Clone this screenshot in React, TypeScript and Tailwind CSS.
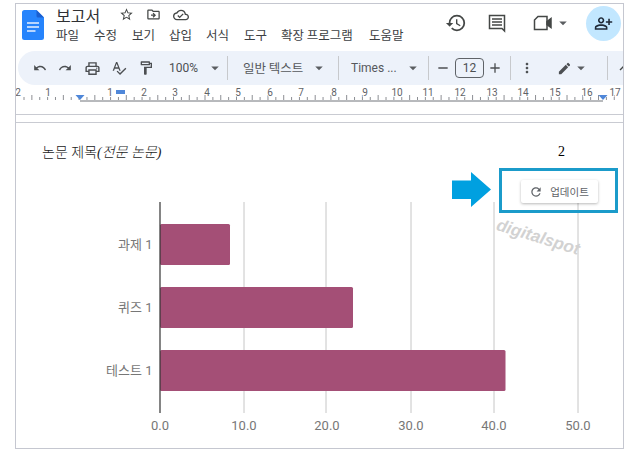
import React from "react";
import {
  MdUndo, MdRedo, MdOutlinePrint, MdOutlineSpellcheck, MdOutlineFormatPaint, MdMoreVert, MdEdit, MdRefresh,
  MdOutlinePersonAddAlt, MdHistory, MdStarBorder, MdOutlineDriveFileMove, MdOutlineCloudDone, MdArrowDropDown, MdAdd, MdRemove,
} from "react-icons/md";

const KR = "font-['Noto_Sans_CJK_KR','Noto_Sans',sans-serif]";

function Caret({ className = "" }: { className?: string }) {
  return <MdArrowDropDown size={18} className={`text-[#5a5d60] shrink-0 ${className}`} />;
}
function Sep({ className = "" }: { className?: string }) {
  return <div className={`w-px h-[24px] bg-[#c7c9cc] shrink-0 ${className}`} />;
}
function Slot({ w, children }: { w: string; children: React.ReactNode }) {
  return <div className={`${w} shrink-0 flex items-center justify-center text-[#4c4f52]`}>{children}</div>;
}

function DocsLogo() {
  return (
    <svg width="22" height="30" viewBox="0 0 22 30" className="shrink-0">
      <path d="M2.5 0H14.5L22 7.5V27.5a2.5 2.5 0 0 1-2.5 2.5H2.5A2.5 2.5 0 0 1 0 27.5V2.5A2.5 2.5 0 0 1 2.5 0z" fill="#2684fc" />
      <path d="M14.5 0L22 7.5H16a1.5 1.5 0 0 1-1.5-1.5z" fill="#1a5fd0" />
      <path d="M5 13h12M5 17h12M5 21h8.5" stroke="#e8f0fe" strokeWidth="1.7" />
    </svg>
  );
}

function Ruler() {
  const labels: [string, number][] = [["2", 18], ["1", 48], ["1", 110], ["2", 144], ["3", 175], ["4", 207], ["5", 238], ["6", 270], ["7", 301], ["8", 334], ["9", 365], ["10", 397], ["11", 428], ["12", 460], ["13", 492], ["14", 523], ["15", 555], ["16", 587], ["17", 615]];
  const ticks: number[] = [];
  for (let i = 0; i < 76; i++) ticks.push(24 + i * 7.87);
  return (
    <svg width="607" height="17" viewBox="16 85 607 17" className="block shrink-0">
      {ticks.map((x, i) => (
        <line key={i} x1={x} x2={x} y1={i % 2 ? 95 : 97} y2="100" stroke="#8d8f94" strokeWidth="1" />
      ))}
      {labels.map(([t, x], i) => (
        <text key={i} x={x} y="96" textAnchor="middle" fontSize="10" fill="#5f6368" fontFamily="Roboto, sans-serif" stroke="#fff" strokeWidth="2" paintOrder="stroke">{t}</text>
      ))}
      <line x1="80" x2="603" y1="101" y2="101" stroke="#70757a" strokeWidth="1" />
      <path d="M75.5 95h9l-4.5 5z" fill="#4f87d9" />
      <path d="M598.5 95h9l-4.5 5z" fill="#4f87d9" />
      <rect x="116" y="90" width="9" height="4" fill="#4f87d9" />
    </svg>
  );
}

function Chart() {
  const f = "Roboto, 'Noto Sans CJK KR', sans-serif";
  const grid = [244, 326, 411, 494, 578];
  const xl: [string, number][] = [["0.0", 160], ["10.0", 244], ["20.0", 327], ["30.0", 411], ["40.0", 494], ["50.0", 578]];
  const bars: [string, number, number][] = [["과제 1", 224, 230], ["퀴즈 1", 287, 353], ["테스트 1", 350, 505.5]];
  return (
    <svg width="607" height="283" viewBox="16 165 607 283" className="block">
      {grid.map((x) => (
        <line key={x} x1={x} x2={x} y1="202" y2="413" stroke="#c6c6c6" strokeWidth="1" />
      ))}
      {bars.map(([t, y, r]) => (
        <g key={t}>
          <rect x="160" y={y} width={r - 160} height="41" rx="1.5" fill="#a44f76" />
          <text x="152.5" y={y + 25} textAnchor="end" fontSize="13" fill="#777" fontFamily={f}>{t}</text>
        </g>
      ))}
      <line x1="160" x2="160" y1="202" y2="413" stroke="#333" strokeWidth="1.2" />
      {xl.map(([t, x]) => (
        <text key={t} x={x} y="430" textAnchor="middle" fontSize="13" fill="#777" fontFamily={f}>{t}</text>
      ))}
    </svg>
  );
}

export default function App() {
  return (
    <div className={`w-[640px] h-[450px] bg-white pt-[3px] pl-[15px] overflow-hidden ${KR}`}>
      <div className="w-[609px] h-[446px] border border-[#c5c7d0] flex flex-col overflow-hidden">
        {/* title bar */}
        <div className="h-[47px] shrink-0 flex items-start pl-[6px] bg-white">
          <div className="mt-[6px]"><DocsLogo /></div>
          <div className="ml-[12px] flex flex-col">
            <div className="flex items-center h-[21px]">
              <span className="text-[16px] leading-none text-[#303134] w-[63px]">보고서</span>
              <MdStarBorder size={15} className="text-[#444746]" />
              <MdOutlineDriveFileMove size={15} className="text-[#444746] ml-[12px]" />
              <MdOutlineCloudDone size={16} className="text-[#444746] ml-[12px]" />
            </div>
            <div className="flex items-center h-[21px] text-[12.5px] text-[#3c4043] leading-none">
              <span className="w-[38px]">파일</span>
              <span className="w-[38px]">수정</span>
              <span className="w-[37px]">보기</span>
              <span className="w-[37px]">삽입</span>
              <span className="w-[38px]">서식</span>
              <span className="w-[37px]">도구</span>
              <span className="w-[88px] whitespace-nowrap">확장 프로그램</span>
              <span>도움말</span>
            </div>
          </div>
          <div className="ml-auto flex items-center h-[38px] pr-[2px]">
            <MdHistory size={22} className="text-[#444746]" />
            <svg width="20" height="20" viewBox="0 0 20 20" className="ml-[20px]" fill="none" stroke="#444746">
              <path d="M2.5 2.5h15v15.5l-2.5-2.5H2.5z" strokeWidth="1.5" />
              <path d="M5 6h10M5 9h10M5 12h10" strokeWidth="1.4" />
            </svg>
            <svg width="20" height="16" viewBox="0 0 20 16" className="ml-[26px]" fill="none" stroke="#444746" strokeWidth="1.5">
              <path d="M5 1.5h9v13H1.5V5z" />
              <path d="M14 6.5l4-3v9l-4-3z" fill="#444746" />
            </svg>
            <Caret className="ml-[1px]" />
            <div className="ml-[14px] w-[35px] h-[35px] rounded-full bg-[#c2e7ff] flex items-center justify-center">
              <MdOutlinePersonAddAlt size={19} className="text-[#1f2937]" />
            </div>
          </div>
        </div>

        {/* toolbar */}
        <div className="ml-[2px] h-[34px] shrink-0 bg-[#edf2fa] rounded-l-[17px] flex items-center pl-[11px] text-[#4c4f52] overflow-hidden">
          <Slot w="w-[22px]"><MdUndo size={14} /></Slot>
          <Slot w="w-[28px]"><MdRedo size={14} /></Slot>
          <Slot w="w-[26px]"><MdOutlinePrint size={17} /></Slot>
          <Slot w="w-[28px]"><MdOutlineSpellcheck size={16} /></Slot>
          <Slot w="w-[26px]"><MdOutlineFormatPaint size={16} /></Slot>
          <span className="ml-[10px] w-[37px] shrink-0 text-[12px] font-['Roboto',sans-serif]">100%</span>
          <Caret />
          <Sep className="ml-[3px]" />
          <span className="ml-[15px] w-[67px] shrink-0 text-[12.5px] text-[#55585c] whitespace-nowrap">일반 텍스트</span>
          <Caret />
          <Sep className="ml-[10px]" />
          <span className="ml-[12px] w-[53px] shrink-0 text-[12px] text-[#55585c] whitespace-nowrap font-['Roboto',sans-serif]">Times ...</span>
          <Caret />
          <Sep className="ml-[6px]" />
          <MdRemove size={16} className="ml-[6px] shrink-0" />
          <div className="ml-[4px] w-[29px] h-[20px] border border-[#5f6368] rounded-[4px] flex items-center justify-center text-[12px] font-['Roboto',sans-serif] shrink-0">12</div>
          <MdAdd size={16} className="ml-[3px] shrink-0" />
          <Sep className="ml-[7px]" />
          <MdMoreVert size={16} className="ml-[8px] shrink-0" />
          <MdEdit size={15} className="ml-[22px] shrink-0" />
          <Caret />
          <Sep className="ml-[17px]" />
          <svg width="10" height="10" viewBox="0 0 10 10" className="ml-[11px] shrink-0" fill="none" stroke="#444746" strokeWidth="1.4">
            <path d="M1 7l4-4 4 4" />
          </svg>
        </div>

        <Ruler />

        {/* page */}
        <div className="h-[12px] shrink-0 bg-white" />
        <div className="h-[9px] shrink-0 border-y border-[#c9cbd2] bg-white" />

        <div className="relative flex-1 bg-white">
          <div className="h-[42px] flex items-start pt-[23px] pl-[26px] leading-none">
            <span className="w-[516px] text-[14px] font-light text-[#222] font-['Liberation_Serif','Noto_Sans_CJK_KR',serif] whitespace-nowrap">
              논문 제목<i>(전문 논문)</i>
            </span>
            <span className="-mt-px text-[14px] text-black font-['Liberation_Serif',serif]">2</span>
          </div>
          <Chart />

          {/* highlight overlays */}
          <div className="absolute left-[483px] top-[45px] w-[119px] h-[45px] border-[3px] border-[#1b9bca] flex items-start justify-center pt-[9px] pl-[1px]">
            <div className="w-[77px] h-[23px] bg-white rounded-[2px] shadow-[0_1px_3px_rgba(0,0,0,0.28)] flex items-center justify-center gap-[7px] text-[10.5px] text-[#5f6368]">
              <MdRefresh size={14} />
              <span>업데이트</span>
            </div>
          </div>
          <svg width="39" height="35" viewBox="0 0 39 35" className="absolute left-[436px] top-[49px]">
            <path d="M0 8.5h19V0l20 17.5L19 35v-8H0z" fill="#00a0e0" />
          </svg>
          <span className="absolute left-[481px] top-[93px] rotate-[17deg] origin-left text-[17px] font-bold italic text-[#d2d2d2] font-['Liberation_Sans',sans-serif] leading-none">
            digitalspot
          </span>
        </div>
      </div>
    </div>
  );
}
